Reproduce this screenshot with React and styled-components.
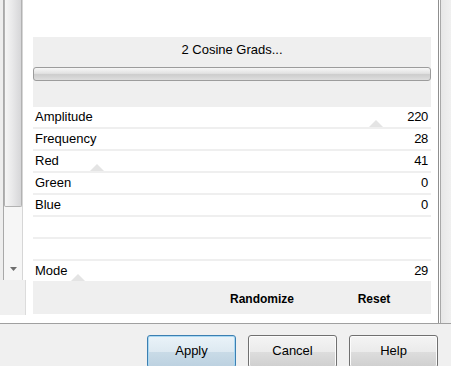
import React from 'react'
import styled, { createGlobalStyle } from 'styled-components'

const GlobalStyle = createGlobalStyle`
    html, body {
        margin: 0;
        padding: 0;
        background: #f0f0f0;
        overflow: hidden;
    }
    * {
        box-sizing: border-box;
    }
`

const FONT = '"Liberation Sans", Arial, sans-serif'
const BAND = '#efefef'

const Window = styled.div`
    width: 451px;
    height: 366px;
    font-family: ${FONT};
    font-size: 13px;
    color: #000;
    background: #f0f0f0;
    overflow: hidden;
`

const Top = styled.div`
    display: flex;
    height: 324px;
    border-bottom: 1px solid #a0a0a0;
`

const LeftRail = styled.div`
    width: 26px;
    flex-shrink: 0;
    display: flex;
    flex-direction: column;
    background: #ffffff;
`

const RailTrackRow = styled.div`
    display: flex;
    height: 280px;
    padding-left: 3px;
    background: linear-gradient(to right, #eeeeee 0, #eeeeee 3px, #ffffff 3px);
`

const ScrollTrack = styled.div`
    width: 20px;
    height: 100%;
    display: flex;
    flex-direction: column;
    justify-content: space-between;
    border-left: 1px solid #a9a9a9;
    border-right: 1px solid #d6d6d6;
    background: #f6f6f6;
`

const Thumb = styled.div`
    height: 207px;
    border: 1px solid #b2b2b2;
    border-top: none;
    border-radius: 0 0 2px 2px;
    background: linear-gradient(to right, #f6f6f6 0%, #e9e9ea 45%, #d6d6d8 100%);
`

const ArrowBox = styled.div`
    height: 22px;
    display: flex;
    align-items: center;
    justify-content: center;
`

const RailFoot = styled.div`
    flex: 1;
    background: #f0f0f0;
    border-right: 1px solid #dcdcdc;
    margin-bottom: 8px;
`

const Panel = styled.div`
    width: 413px;
    flex-shrink: 0;
    background: #ffffff;
    border-right: 1px solid #8f8f8f;
    padding: 37px 7px 0 7px;
    display: flex;
    flex-direction: column;
`

const RightRail = styled.div`
    flex: 1;
    border-left: 1px solid #ffffff;
    box-shadow: inset 1px 0 0 #a8a8a8;
    background: linear-gradient(to right, #e6e6e6, #f0f0f0);
`

const Header = styled.div`
    height: 70px;
    background: ${BAND};
    display: flex;
    flex-direction: column;
`

const Title = styled.div`
    height: 26px;
    line-height: 26px;
    text-align: center;
    font-size: 13px;
`

const Progress = styled.div`
    margin-top: 4px;
    height: 14px;
    border: 1px solid #9c9c9c;
    border-radius: 3px;
    background: linear-gradient(to bottom, #f7f7f7 0%, #e2e2e2 45%, #cdcdcd 55%, #dedede 100%);
`

const Rows = styled.div`
    display: flex;
    flex-direction: column;
`

const Row = styled.div`
    position: relative;
    height: 22px;
    display: flex;
    align-items: center;
    justify-content: space-between;
    padding: 0 3px 2px 2px;
    border-bottom: 2px solid #efefef;
`

const Label = styled.span`
    position: relative;
    z-index: 1;
`

const Value = styled.span`
    position: relative;
    z-index: 1;
    font-size: 13px;
    letter-spacing: -0.3px;
`

const SliderMark = styled.div`
    position: absolute;
    bottom: 0;
    width: 0;
    height: 0;
    margin-left: -7px;
    border-left: 7px solid transparent;
    border-right: 7px solid transparent;
    border-bottom: 7px solid #e4e4e4;
`

const ActionBar = styled.div`
    height: 31px;
    background: ${BAND};
    display: flex;
    justify-content: flex-end;
    align-items: center;
    padding-right: 1px;
`

const Action = styled.span`
    width: 112px;
    text-align: center;
    font-weight: bold;
    font-size: 12px;
`

const ButtonBar = styled.div`
    display: flex;
    justify-content: flex-end;
    gap: 12px;
    padding: 11px 13px 0 0;
`

const Button = styled.button`
    width: ${props => (props.wide ? '90px' : '89px')};
    height: 33px;
    font-family: ${FONT};
    font-size: 13px;
    color: #000;
    border-radius: 3px;
    border: 1px solid ${props => (props.isDefault ? '#3c7fb1' : '#707070')};
    background: ${props =>
        props.isDefault
            ? 'linear-gradient(to bottom, #eaf3f9 0%, #dde9f1 50%, #c9dbe7 52%, #bcd1e0 100%)'
            : 'linear-gradient(to bottom, #f4f4f4 0%, #ebebeb 50%, #dddddd 52%, #cfcfcf 100%)'};
    box-shadow: inset 0 0 0 1px ${props => (props.isDefault ? '#a9d8f3' : '#fcfcfc')};
    padding: 0 0 3px 0;
`

const params = [
    { label: 'Amplitude', value: 220, thumb: true },
    { label: 'Frequency', value: 28 },
    { label: 'Red', value: 41, thumb: true },
    { label: 'Green', value: 0 },
    { label: 'Blue', value: 0 },
    { label: '', value: null },
    { label: '', value: null },
    { label: 'Mode', value: 29, thumb: true },
]

const DownArrow = () => (
    <svg width="7" height="4" viewBox="0 0 7 4">
        <path d="M0 0 H7 L3.5 4 Z" fill="#6e6e6e" />
    </svg>
)

export default function App() {
    return (
        <Window>
            <GlobalStyle />
            <Top>
                <LeftRail>
                    <RailTrackRow>
                        <ScrollTrack>
                            <Thumb />
                            <ArrowBox>
                                <DownArrow />
                            </ArrowBox>
                        </ScrollTrack>
                    </RailTrackRow>
                    <RailFoot />
                </LeftRail>
                <Panel>
                    <Header>
                        <Title>2 Cosine Grads...</Title>
                        <Progress />
                    </Header>
                    <Rows>
                        {params.map((p, i) => (
                            <Row key={i}>
                                {p.thumb && <SliderMark style={{ left: `${(p.value / 255) * 100}%` }} />}
                                <Label>{p.label}</Label>
                                <Value>{p.value}</Value>
                            </Row>
                        ))}
                    </Rows>
                    <ActionBar>
                        <Action>Randomize</Action>
                        <Action>Reset</Action>
                    </ActionBar>
                </Panel>
                <RightRail />
            </Top>
            <ButtonBar>
                <Button isDefault>Apply</Button>
                <Button>Cancel</Button>
                <Button>Help</Button>
            </ButtonBar>
        </Window>
    )
}
